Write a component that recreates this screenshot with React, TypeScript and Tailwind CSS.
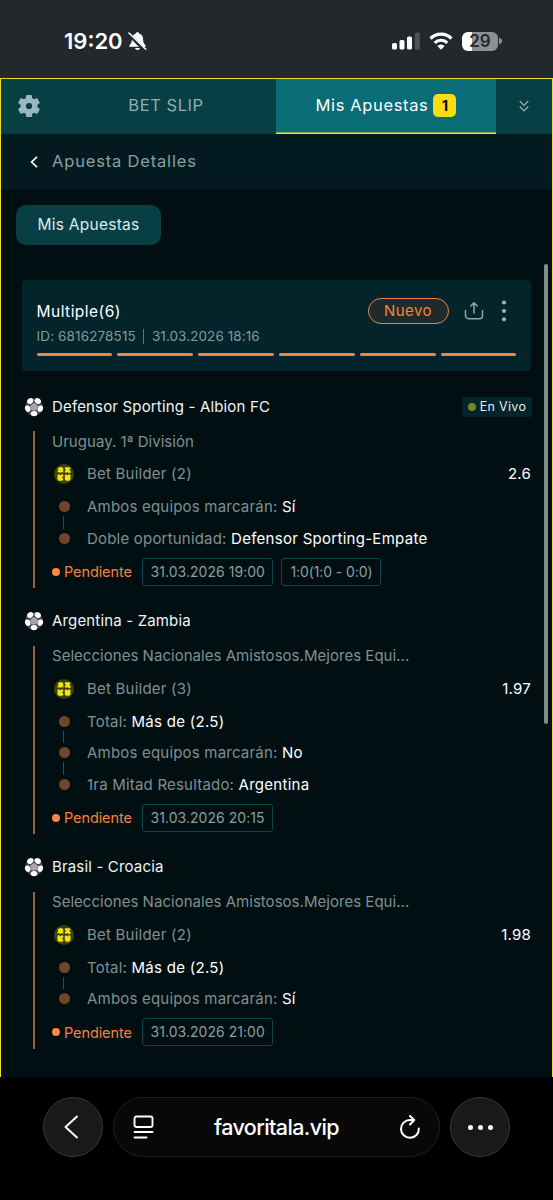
import { ReactNode } from 'react'

interface Selection {
  label: string
  value: string
}

interface Bet {
  title: string
  league: string
  odds: string
  live?: boolean
  selections: Selection[]
  date: string
  score?: string
}

const bets: Bet[] = [
  {
    title: 'Defensor Sporting - Albion FC',
    league: 'Uruguay. 1ª División',
    odds: '2.6',
    live: true,
    selections: [
      { label: 'Ambos equipos marcarán:', value: 'Sí' },
      { label: 'Doble oportunidad:', value: 'Defensor Sporting-Empate' },
    ],
    date: '31.03.2026 19:00',
    score: '1:0(1:0 - 0:0)',
  },
  {
    title: 'Argentina - Zambia',
    league: 'Selecciones Nacionales Amistosos.Mejores Equi...',
    odds: '1.97',
    selections: [
      { label: 'Total:', value: 'Más de (2.5)' },
      { label: 'Ambos equipos marcarán:', value: 'No' },
      { label: '1ra Mitad Resultado:', value: 'Argentina' },
    ],
    date: '31.03.2026 20:15',
  },
  {
    title: 'Brasil - Croacia',
    league: 'Selecciones Nacionales Amistosos.Mejores Equi...',
    odds: '1.98',
    selections: [
      { label: 'Total:', value: 'Más de (2.5)' },
      { label: 'Ambos equipos marcarán:', value: 'Sí' },
    ],
    date: '31.03.2026 21:00',
  },
]

function BellOff() {
  return (
    <svg className="ml-[5px] h-5 w-[19px]" viewBox="0 0 19 20">
      <path d="M9.500 1.200c-1 0-1.800.6-2 1.500C5 3.600 4 5.600 3.900 8.200c-.1 3-.6 4.200-2.400 6-.6.6-.3 1.600.6 1.600h14.800c.9 0 1.200-1 .6-1.600-1.800-1.800-2.300-3-2.400-6C15 5.600 14 3.600 11.500 2.700c-.2-.9-1-1.500-2-1.500z" fill="#fff" />
      <path d="M7 17h5c-.3 1.300-1.300 2-2.500 2S7.300 18.300 7 17z" fill="#fff" />
      <path d="M.8 3.200 16.200 18.600" stroke="#23282c" strokeWidth="3.600" />
      <path d="M1 2 17.800 18.300" stroke="#fff" strokeWidth="1.500" strokeLinecap="round" />
    </svg>
  )
}

function StatusBar() {
  return (
    <div className="flex h-[78px] items-start justify-between bg-[#23282c] pl-[64px] pr-[51px] pt-[27px]">
      <div className="flex h-7 items-center text-white">
        <span className="text-[22px] font-semibold">19:20</span>
        <BellOff />
      </div>
      <div className="flex h-7 items-center">
        <svg className="h-[18px] w-7" viewBox="0 0 28 18">
          <rect x="0" y="11" width="5" height="6.500" rx="1.500" fill="#fff" />
          <rect x="7.500" y="8" width="5" height="9.500" rx="1.500" fill="#fff" />
          <rect x="15" y="4.500" width="5" height="13" rx="1.500" fill="#fff" />
          <rect x="22.800" y="0.500" width="5" height="17" rx="1.500" fill="#505457" />
        </svg>
        <svg className="ml-[9px] h-[18px] w-6" viewBox="0 0 24 18">
          <path d="M12 17.800 8.300 14a5.300 5.300 0 0 1 7.400 0z" fill="#fff" />
          <path d="M5.700 10.800a9 9 0 0 1 12.600 0" fill="none" stroke="#fff" strokeWidth="3.200" />
          <path d="M1.500 6.500a15 15 0 0 1 21 0" fill="none" stroke="#fff" strokeWidth="3.200" />
        </svg>
        <div className="ml-[9px] flex h-[19px] w-[36px] items-center justify-center rounded-[6px] bg-[linear-gradient(90deg,#fff_29%,#8e9193_29%)] text-[17px] font-semibold leading-none text-[#23282c]">
          29
        </div>
        <div className="ml-px h-[6px] w-[3px] rounded-r-full bg-[#8e9193]" />
      </div>
    </div>
  )
}

function Gear() {
  return (
    <svg className="h-[24px] w-[24px]" viewBox="0 0 24 24" fill="#9bb8bc">
      <path
        fillRule="evenodd"
        d="M9.300 1h5.400l.6 3.200 1.800 1 3.100-1.100 2.700 4.700-2.500 2.100v2.200l2.500 2.100-2.700 4.700-3.100-1.100-1.800 1-.6 3.200H9.300l-.6-3.200-1.800-1-3.100 1.100-2.700-4.700 2.500-2.100v-2.200L1.100 8.800l2.700-4.700 3.100 1.100 1.800-1zM12 8.900a3.100 3.100 0 1 0 0 6.200 3.100 3.100 0 0 0 0-6.200z"
      />
    </svg>
  )
}

function Tabs() {
  return (
    <div className="flex h-[55px] bg-[#083f45]">
      <div className="flex w-[55px] items-center pb-px pl-[16px]">
        <Gear />
      </div>
      <div className="flex w-[220px] items-center justify-center pb-[2px] text-[16.500px] tracking-[0.550px] text-[#91aeb1]">
        BET SLIP
      </div>
      <div className="flex w-[220px] items-center justify-center bg-[#096c76] pb-[2px] text-[16.500px] text-white shadow-[inset_0_-1.5px_0_#f5e516]">
        <span className="tracking-[0.640px]">Mis Apuestas</span>
        <span className="ml-[5px] flex h-[23px] w-[23px] items-center justify-center rounded-[5px] bg-[#f7dd13] text-[14px] font-bold text-black">
          1
        </span>
      </div>
      <div className="flex flex-1 items-center justify-center pb-px">
        <svg className="h-3 w-[10px]" viewBox="0 0 10 12" fill="none" stroke="#8fb0b3" strokeWidth="1.200">
          <path d="M.7 1 5 5.300 9.300 1M.7 6.500 5 10.800l4.300-4.300" />
        </svg>
      </div>
    </div>
  )
}

function Summary() {
  return (
    <div className="ml-[21px] mt-[35px] h-[91px] w-[509px] rounded-[4px] bg-[#03242a] px-[14.500px] pt-[18px]">
      <div className="flex h-[26px] items-center">
        <span className="flex-1 pt-px text-[15.500px] tracking-[0.480px] text-white">Multiple(6)</span>
        <span className="flex h-[26px] w-[81px] items-center justify-center rounded-full border-[1.500px] border-[#e8843f] bg-[#1f2b2b] text-[15px] tracking-[0.450px] text-[#f5853f]">
          Nuevo
        </span>
        <svg className="ml-[15px] h-[20px] w-[20px]" viewBox="0 0 20 20" fill="none" stroke="#8ea5a8" strokeWidth="1.500" strokeLinecap="round" strokeLinejoin="round">
          <path d="M1.500 9.500v5.200a3 3 0 0 0 3 3h11a3 3 0 0 0 3-3V9.500M10 12V2M6.800 5 10 1.800 13.200 5" />
        </svg>
        <svg className="ml-[17px] mr-[10px] h-[22px] w-[6px]" viewBox="0 0 6 22" fill="#a2b3b5">
          <circle cx="3" cy="2.500" r="2.100" />
          <circle cx="3" cy="11" r="2.100" />
          <circle cx="3" cy="19.300" r="2.100" />
        </svg>
      </div>
      <div className="mt-[2px] flex h-[20px] items-center text-[13.500px] text-[#829a9d]">
        <span className="tracking-[0.130px]">ID: 6816278515</span>
        <span className="mx-[7.500px] h-[15px] w-px bg-[#5d787b]" />
        <span className="tracking-[0.080px]">31.03.2026 18:16</span>
      </div>
      <div className="mt-[7px] flex gap-[5px]">
        {[0, 1, 2, 3, 4, 5].map((i) => (
          <div key={i} className="h-[3px] flex-1 rounded-full bg-[#f0854a]" />
        ))}
      </div>
    </div>
  )
}

function Ball() {
  return (
    <svg className="h-5 w-5" viewBox="0 0 20 20">
      <circle cx="10" cy="10" r="8.800" fill="#45454b" />
      <g fill="#fff">
        <ellipse cx="6.200" cy="4" rx="3.300" ry="2.700" transform="rotate(-36 6.200 4)" />
        <ellipse cx="13.800" cy="4" rx="3.300" ry="2.700" transform="rotate(36 13.800 4)" />
        <ellipse cx="16.300" cy="11.700" rx="2.700" ry="3.300" transform="rotate(18 16.300 11.700)" />
        <ellipse cx="10" cy="16.600" rx="3.300" ry="2.600" />
        <ellipse cx="3.700" cy="11.700" rx="2.700" ry="3.300" transform="rotate(-18 3.700 11.700)" />
      </g>
      <path d="m10 5.800 4 2.900-1.500 4.700h-5L6 8.700z" fill="#a5a6b4" />
    </svg>
  )
}

function BuilderIcon() {
  return (
    <svg className="h-5 w-5" viewBox="0 0 20 20">
      <circle cx="10" cy="10" r="10" fill="#3c420d" />
      <g fill="#f4e414">
        <path d="M5.200 3.300h2.600q1.500 0 1.500 1.500v4.200L7.900 7.700 6.300 9.100 4.800 7.900 3.400 8.700V7.200l1.300-1.100-1.200-1.200z" />
        <path d="M10.900 3.300h4q1.500 0 1.500 1.400l-1.200 1.300 1.300 1.100v1.600l-1.600.6-1.400-1.300-1.400 1.100-1.300-1V7.200l1.200-1.100-1.100-1z" />
        <path d="m3.500 10.800 1.300-.7 1.500 1.400 1.600-1.500 1.400 1v1.300l-1.400 1.200 1.400 1.200v.5q0 1.500-1.500 1.500H5.200q-1.700 0-1.700-1.800z" />
        <path d="m10.800 11 1.300-.8 1.400 1.300 1.500-1.400 1.500 1v3.400q0 2.200-1.900 2.200h-2.100q-1.700 0-1.700-1.700z" />
      </g>
    </svg>
  )
}

function Chip({ children, tight }: { children: ReactNode; tight?: boolean }) {
  return (
    <span
      className={`flex h-[28px] items-center rounded-[3px] border border-[#08474e] pb-px pl-2 pr-[7.500px] text-[14px] text-[#8a9fa0] ${
        tight ? 'tracking-[-0.100px]' : 'tracking-[0.040px]'
      }`}
    >
      {children}
    </span>
  )
}

function BetItem({ bet }: { bet: Bet }) {
  return (
    <div className="pl-[23px] pr-[20px]">
      <div className="flex h-[30px] items-center pt-px">
        <Ball />
        <span className="ml-[8px] flex-1 pt-px text-[15px] tracking-[0.160px] text-[#f0f5f5]">{bet.title}</span>
        {bet.live && (
          <span className="flex h-[20px] w-[70px] items-center justify-center rounded-[2px] bg-[#03242a] pt-px text-[12.500px] tracking-[0.300px] text-[#e6eeee]">
            <span className="mr-[4px] h-[8px] w-[8px] rounded-full bg-[#7b8422]" />
            En Vivo
          </span>
        )}
      </div>
      <div className="ml-[9px] mt-[10px] border-l-2 border-[#a3623c] pb-[2.500px] pl-[17px]">
        <div className="flex h-[21px] items-center pt-px text-[15px] tracking-[0.030px] text-[#7f9092]">{bet.league}</div>
        <div className="mt-[5px] flex h-[34px] items-center text-[15px] tracking-[0.220px] text-[#7f9092]">
          <span className="ml-[2px]"><BuilderIcon /></span>
          <span className="ml-[13px] flex-1 pt-px">Bet Builder ({bet.selections.length})</span>
          <span className="pr-px pt-px text-white">{bet.odds}</span>
        </div>
        {bet.selections.map((s, i) => (
          <div key={i} className="relative flex h-[31.500px] items-center text-[15px]">
            <span className="ml-[6.500px] h-[11px] w-[11px] rounded-full bg-[#704529]" />
            {i < bet.selections.length - 1 && (
              <span className="absolute left-[11px] top-[25px] h-[12.500px] w-px bg-[#0a5a60]" />
            )}
            <span className="ml-[17.500px] pt-px tracking-[0.200px] text-[#7f9092]">
              {s.label} <span className="tracking-[0.280px] text-white">{s.value}</span>
            </span>
          </div>
        ))}
        <div className="mt-[4px] flex h-[27.500px] items-center">
          <span className="h-[8px] w-[8px] rounded-full bg-[#ff8542]" />
          <span className="ml-[4px] w-[77.500px] pt-px text-[14.500px] tracking-[-0.100px] text-[#f5823f]">Pendiente</span>
          <div className="flex gap-2">
            <Chip>{bet.date}</Chip>
            {bet.score && <Chip tight>{bet.score}</Chip>}
          </div>
        </div>
      </div>
    </div>
  )
}

function BrowserBar() {
  return (
    <div className="flex h-[123px] items-start bg-black pl-[43px] pt-[20px]">
      <div className="flex h-[60px] w-[60px] items-center justify-center rounded-full border border-[#383838] bg-[#191919]">
        <svg className="-ml-1 h-6 w-4" viewBox="0 0 16 24" fill="none" stroke="#fff" strokeWidth="1.900" strokeLinecap="round" strokeLinejoin="round">
          <path d="M14 1.500 2.500 12 14 22.500" />
        </svg>
      </div>
      <div className="ml-[10px] flex h-[60px] w-[327px] items-center rounded-full border border-[#1f1f1f] bg-[#080808] pl-[19px] pr-[18px]">
        <svg className="h-6 w-[21px]" viewBox="0 0 21 24" fill="none" stroke="#fff" strokeWidth="1.900" strokeLinecap="round">
          <rect x="1.500" y="1.500" width="18" height="10.500" rx="2" />
          <path d="M1.500 17h18M1.500 22.500h12" />
        </svg>
        <span className="flex-1 text-center text-[21.500px] font-medium tracking-[-0.620px] text-white">favoritala.vip</span>
        <svg className="h-6 w-[22px]" viewBox="0 0 22 24" fill="none" stroke="#fff" strokeWidth="2" strokeLinecap="round" strokeLinejoin="round">
          <path d="M19.800 13.500A8.900 8.900 0 1 1 11 5h4M11 1l4.200 4-4.200 4.500" />
        </svg>
      </div>
      <div className="ml-[10px] flex h-[60px] w-[60px] items-center justify-center gap-[5px] rounded-full border border-[#383838] bg-[#191919]">
        <span className="h-[5px] w-[5px] rounded-full bg-white" />
        <span className="h-[5px] w-[5px] rounded-full bg-white" />
        <span className="h-[5px] w-[5px] rounded-full bg-white" />
      </div>
    </div>
  )
}

export default function App() {
  return (
    <div className="h-[1200px] w-[553px] overflow-hidden whitespace-nowrap bg-black font-['Inter',sans-serif]">
      <StatusBar />
      <div className="relative h-[999px] border-x border-t border-[#e5dc2f] bg-[#010f12]">
        <Tabs />
        <div className="flex h-[55px] items-center bg-[#031b20] pl-[29px]">
          <svg className="h-3 w-2" viewBox="0 0 8 12" fill="none" stroke="#fff" strokeWidth="1.700">
            <path d="M7 .8 1.600 6 7 11.200" />
          </svg>
          <span className="ml-[14px] text-[16.500px] tracking-[0.820px] text-[#8b9fa1]">Apuesta Detalles</span>
        </div>
        <div className="ml-[15px] mt-[16px] flex h-[40px] w-[145px] items-center justify-center rounded-[10px] bg-[#083f45] text-[15.500px] tracking-[0.250px] text-[#dcebeb]">
          Mis Apuestas
        </div>
        <Summary />
        <div className="mt-[20px] flex flex-col">
          {bets.map((bet) => (
            <div key={bet.title} className="pb-[17.500px]">
              <BetItem bet={bet} />
            </div>
          ))}
        </div>
        {/* scrollbar */}
        <div className="absolute right-[4px] top-[185px] h-[460px] w-[4px] rounded-full bg-[#858b8d]" />
      </div>
      <BrowserBar />
    </div>
  )
}
